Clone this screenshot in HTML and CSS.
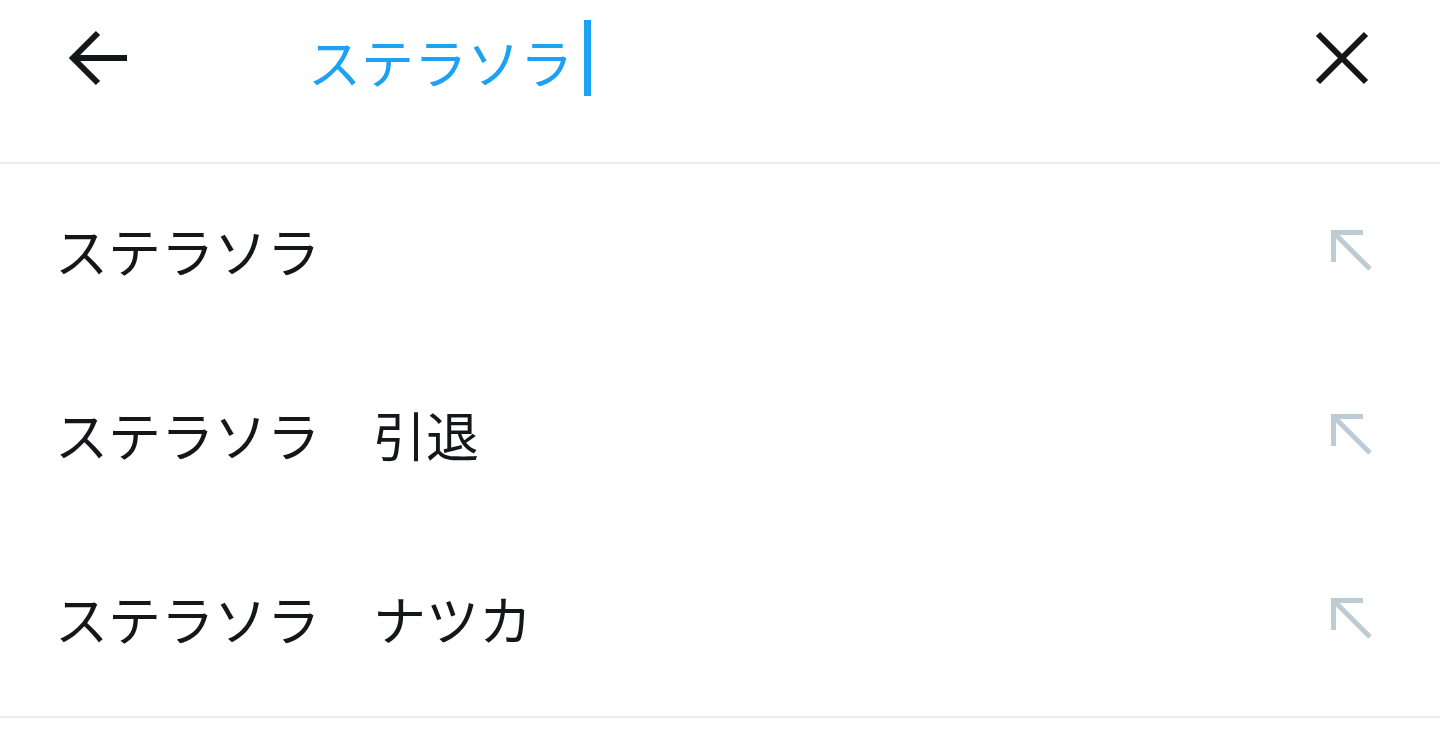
FILE: index.html
```html
<!DOCTYPE html>
<html lang="ja">
<head>
<meta charset="utf-8">
<link rel="stylesheet" href="styles.css">
</head>
<body>
<header class="header">
  <div class="bar">
    <button class="icon-btn back" aria-label="戻る">
      <svg width="60" height="60" viewBox="0 0 60 60"><path d="M59 30 H5 M30 5 L5 30 L30 55" fill="none" stroke="#14171a" stroke-width="6" stroke-linejoin="miter"/></svg>
    </button>
    <div class="search">
      <span class="query">ステラソラ</span><span class="caret"></span>
    </div>
    <button class="icon-btn close" aria-label="クリア">
      <svg width="56" height="56" viewBox="0 0 56 56"><path d="M4 4 L52 52 M52 4 L4 52" fill="none" stroke="#14171a" stroke-width="6"/></svg>
    </button>
  </div>
</header>
<ul class="list">
  <li class="row"><span class="label">ステラソラ</span>
    <svg class="nw" width="44" height="44" viewBox="0 0 44 44"><path d="M4.5 34 V4.5 H34 M4.5 4.5 L41 41" fill="none" stroke="#bccbd4" stroke-width="5"/></svg></li>
  <li class="row"><span class="label">ステラソラ　引退</span>
    <svg class="nw" width="44" height="44" viewBox="0 0 44 44"><path d="M4.5 34 V4.5 H34 M4.5 4.5 L41 41" fill="none" stroke="#bccbd4" stroke-width="5"/></svg></li>
  <li class="row"><span class="label">ステラソラ　ナツカ</span>
    <svg class="nw" width="44" height="44" viewBox="0 0 44 44"><path d="M4.5 34 V4.5 H34 M4.5 4.5 L41 41" fill="none" stroke="#bccbd4" stroke-width="5"/></svg></li>
</ul>
</body>
</html>
```

FILE: styles.css
```css
html, body {
  margin: 0;
  padding: 0;
  background: #fff;
  font-family: "Noto Sans CJK JP", "Noto Sans", sans-serif;
}
.header {
  height: 162px;
  border-bottom: 2px solid #e6ecf0;
}
.bar {
  height: 116px;
  display: flex;
  align-items: center;
  padding: 0 70px 0 68px;
}
.icon-btn {
  border: 0;
  background: none;
  padding: 0;
  display: flex;
  cursor: pointer;
}
.search {
  flex: 1;
  display: flex;
  align-items: center;
  padding-left: 180px;
}
.query {
  font-size: 53px;
  line-height: 1;
  color: #1da1f2;
  margin-top: 6px;
}
.caret {
  width: 7px;
  height: 76px;
  background: #1da1f2;
  margin-left: 11px;
}
.list {
  list-style: none;
  margin: 0;
  padding: 0;
  border-bottom: 2px solid #e6ecf0;
}
.row {
  height: 184px;
  display: flex;
  align-items: center;
  justify-content: space-between;
  padding: 0 67px 0 55px;
}
.label {
  font-size: 53px;
  line-height: 1;
  color: #14171a;
  margin-top: -12px;
}
.nw {
  margin-top: -12px;
}
```
